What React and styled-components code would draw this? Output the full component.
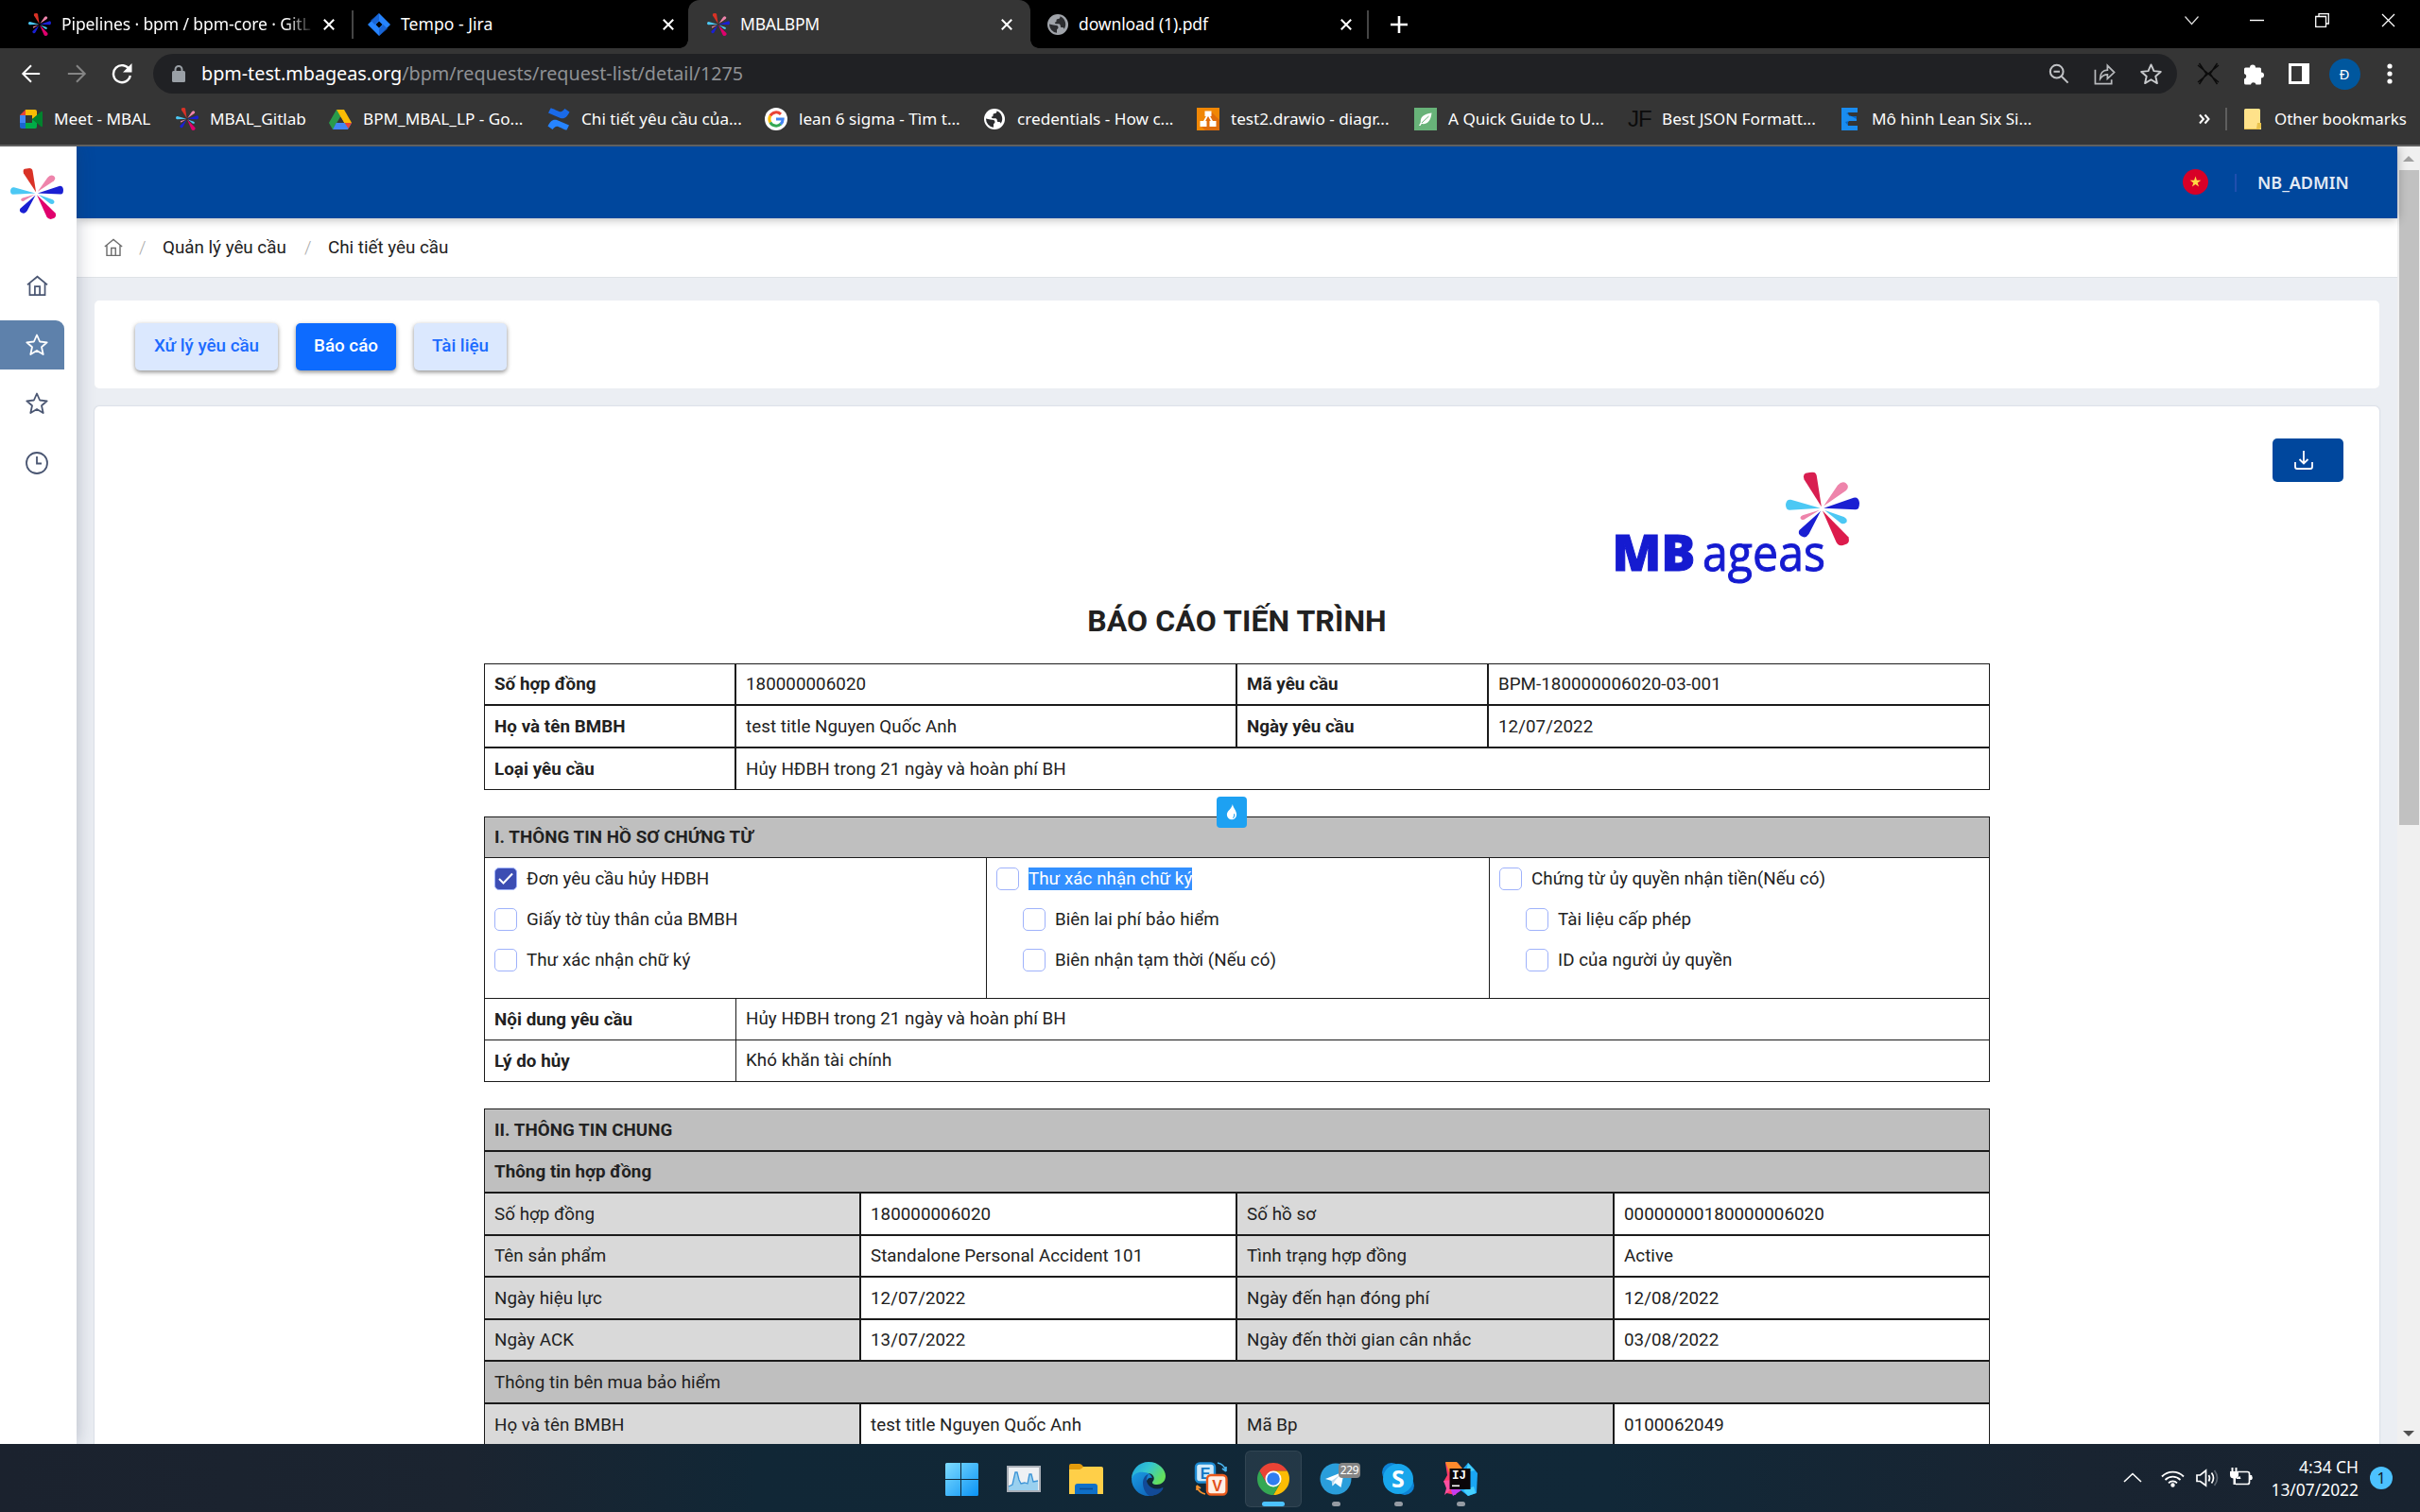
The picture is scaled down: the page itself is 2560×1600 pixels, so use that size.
import React from "react";
import styled, { createGlobalStyle, css } from "styled-components";

const UI = `"Noto Sans", "Open Sans", sans-serif`;
const INK = "#212121";

const Global = createGlobalStyle`
  * { box-sizing: border-box; }
  html, body { margin: 0; padding: 0; }
  body { width: 2560px; height: 1600px; overflow: hidden; background: #000; font-family: Roboto, sans-serif; }
  svg { display: block; flex: none; }
`;

const Screen = styled.div`
  width: 2560px;
  height: 1600px;
  display: flex;
  flex-direction: column;
  overflow: hidden;
`;

/* ---------- browser chrome ---------- */
const TabStrip = styled.div`
  height: 51px;
  flex: none;
  background: #000;
  display: flex;
  font: 18px/51px ${UI};
  color: #fff;
`;
const Tab = styled.div`
  position: relative;
  width: ${(p) => p.$w}px;
  padding-left: ${(p) => p.$pad}px;
  height: 51px;
  display: flex;
  align-items: center;
  background: ${(p) => (p.$active ? "#353535" : "transparent")};
  border-radius: ${(p) => (p.$active ? "12px 12px 0 0" : "0")};
  ${(p) =>
    p.$active &&
    css`
      &::before, &::after {
        content: "";
        position: absolute;
        bottom: 0;
        width: 9px;
        height: 9px;
      }
      &::before { left: -9px; background: radial-gradient(circle at 0 0, transparent 8.5px, #353535 9px); }
      &::after { right: -9px; background: radial-gradient(circle at 100% 0, transparent 8.5px, #353535 9px); }
    `}
`;
const TabTitle = styled.div`
  flex: none;
  width: ${(p) => p.$w}px;
  margin-left: 11px;
  white-space: pre;
  letter-spacing: ${(p) => p.$ls || 0}px;
  font-size: 17.5px;
  ${(p) => p.$fade && css`mask-image: linear-gradient(90deg, #000 90%, rgba(0, 0, 0, 0.1));`}
`;
const TabDivider = styled.div`
  width: 2px;
  height: 30px;
  margin-top: 11px;
  background: #454545;
`;
const Spacer = styled.div`
  flex: ${(p) => (p.$w ? "none" : 1)};
  width: ${(p) => (p.$w ? p.$w + "px" : "auto")};
`;
const IconSlot = styled.div`
  flex: none;
  width: ${(p) => p.$w}px;
  height: ${(p) => p.$h || 51}px;
  display: flex;
  align-items: center;
  justify-content: center;
`;
const WindowButtons = styled.div`
  display: flex;
  height: 42px;
  margin-right: -1px;
`;

const Toolbar = styled.div`
  height: 54px;
  flex: none;
  background: #353535;
  display: flex;
  align-items: center;
  padding-left: 9px;
`;
const Omnibox = styled.div`
  width: 2141px;
  height: 42px;
  margin-left: 9px;
  margin-right: 9px;
  border-radius: 21px;
  background: #202124;
  display: flex;
  align-items: center;
  padding-left: 15px;
  padding-right: 3px;
`;
const Url = styled.div`
  font: 19.75px/42px ${UI};
  color: #8f9195;
  white-space: nowrap;
  margin-left: 12px;
  b { font-weight: 400; color: #fff; }
`;
const Avatar = styled.div`
  width: 33px;
  height: 33px;
  border-radius: 50%;
  background: #00579e;
  color: #fff;
  font: 15px/33px ${UI};
  text-align: center;
`;

const Bookmarks = styled.div`
  height: 50px;
  flex: none;
  background: #353535;
  border-bottom: 2px solid #606060;
  display: flex;
  align-items: center;
  padding-left: 21px;
  padding-bottom: 6px;
  font: 17.15px/40px ${UI};
  color: #fff;
`;
const Bookmark = styled.div`
  width: ${(p) => p.$w}px;
  display: flex;
  align-items: center;
  gap: 12px;
  white-space: nowrap;
`;
const OtherBookmarks = styled.div`
  width: 154px;
  white-space: nowrap;
  font-size: 16.9px;
`;
const FavJF = styled.div`
  width: 24px;
  color: #0c0c0c;
  font: 24px/24px "Liberation Sans", Arial, sans-serif;
  letter-spacing: -1px;
`;

/* ---------- application ---------- */
const Page = styled.div`
  height: 1373px;
  flex: none;
  display: flex;
  background: #ebeef3;
  overflow: hidden;
`;
const Sidebar = styled.div`
  width: 81px;
  flex: none;
  background: #fff;
  box-shadow: 0 0 18px rgba(40, 50, 80, 0.28);
  z-index: 2;
  clip-path: inset(0 -24px 0 0);
`;
const SideLogo = styled.div`
  padding: 23px 0 0 11px;
  height: 121px;
`;
const SideItem = styled.div`
  height: 52px;
  margin-bottom: 10.6px;
  width: 68px;
  padding-left: 10px;
  display: flex;
  align-items: center;
  justify-content: center;
  color: ${(p) => (p.$active ? "#fff" : "#4a5672")};
  background: ${(p) => (p.$active ? "#5e81ab" : "transparent")};
  border-top-right-radius: 9px;
`;
const Main = styled.div`
  width: 2455px;
  display: flex;
  flex-direction: column;
`;
const Header = styled.div`
  height: 76px;
  flex: none;
  background: #00479d;
  display: flex;
  align-items: center;
  justify-content: flex-end;
  padding-right: 50px;
  padding-bottom: 1px;
  box-shadow: 0 1px 10px rgba(0, 0, 0, 0.3);
  z-index: 1;
`;
const HeaderRule = styled.div`
  width: 2px;
  height: 19px;
  margin: 2px 22px 0 28px;
  background: #1f4fae;
`;
const UserName = styled.div`
  font: 600 18px/30px ${UI};
  color: #e3eaf4;
  width: 98px;
  white-space: nowrap;
`;
const Crumbs = styled.div`
  height: 63px;
  flex: none;
  background: #fff;
  border-bottom: 1px solid #dfe2e6;
  display: flex;
  align-items: center;
  padding-left: 29px;
  font-size: 18.8px;
  color: ${INK};
  white-space: nowrap;
`;
const CrumbHome = styled.span`
  color: #6d6d6d;
`;
const Crumb = styled.span`
  width: ${(p) => p.$w}px;
`;
const Slash = styled.span`
  width: 8px;
  margin: 0 17px;
  color: #a8a8a8;
  font-weight: 300;
`;
const TabsCard = styled.div`
  margin: 24px 19px 0 19px;
  height: 93px;
  flex: none;
  background: #fff;
  border-radius: 5px;
  padding: 24px 0 0 43px;
  display: flex;
  gap: 19px;
`;
const Pill = styled.button`
  width: ${(p) => p.$w}px;
  height: 50px;
  padding: 0 0 2px;
  border: 0;
  border-radius: 5px;
  font: 500 18.8px Roboto, sans-serif;
  color: ${(p) => (p.$active ? "#fff" : "#1d6bff")};
  background: ${(p) => (p.$active ? "#0d6bff" : "#dbe8fe")};
  box-shadow: 0 2px 4px rgba(0, 0, 0, 0.36), 0 1px 6px rgba(0, 0, 0, 0.1);
  white-space: nowrap;
`;
const ReportCard = styled.div`
  margin: 19px 19px 0 19px;
  height: 1200px;
  flex: none;
  background: #fff;
  border-radius: 5px;
  box-shadow: 0 0 2px rgba(90, 105, 140, 0.35);
  display: grid;
  grid-template-columns: 412px 1593px 1fr;
`;
const Report = styled.div`
  grid-column: 2;
  padding-top: 65px;
  font-size: 18.75px;
  letter-spacing: 0.05px;
  color: ${INK};
`;
const LogoRow = styled.div`
  height: 125px;
  padding-left: 1188px;
`;
const Title = styled.h1`
  margin: 17px 0 25px;
  height: 40px;
  font: 700 32px/40px Roboto, sans-serif;
  letter-spacing: 0.1px;
  text-align: center;
`;
const Download = styled.button`
  margin: 34px 38px 0 0;
  width: 75px;
  height: 46px;
  padding: 0 9px 0 0;
  border: 0;
  border-radius: 5px;
  background: #00479d;
  justify-self: end;
  display: flex;
  align-items: center;
  justify-content: center;
`;
const Grid = styled.div`
  display: grid;
  width: 1593px;
  margin-bottom: 28px;
  grid-template-columns: ${(p) => p.$cols};
  grid-template-rows: ${(p) => p.$rows};
  line-height: 24px;
`;
const Cell = styled.div`
  border: 1px solid #1b1b1b;
  padding: 0 10px;
  display: flex;
  align-items: center;
  white-space: nowrap;
  grid-column: span ${(p) => p.$span || 1};
  font-weight: ${(p) => (p.$bold ? 700 : 400)};
  background: ${(p) => ({ head: "#bfbfbf", label: "#d9d9d9" }[p.$tone] || "#fff")};
`;
const DocTable = styled.div`
  position: relative;
  width: 1593px;
  margin-bottom: 28px;
  border: 1px solid #1b1b1b;
  line-height: 24px;
`;
const DocHead = styled.div`
  height: 42px;
  background: #bfbfbf;
  padding: 0 10px;
  font-weight: 700;
  line-height: 43px;
`;
const DocColumns = styled.div`
  height: 149px;
  border-top: 1px solid #1b1b1b;
  display: grid;
  grid-template-columns: 530px 532px 1fr;
`;
const DocColumn = styled.div`
  padding: 10px 0 0 10px;
  display: flex;
  flex-direction: column;
  gap: 19px;
  & + & { border-left: 1px solid #1b1b1b; }
`;
const Check = styled.div`
  height: 24px;
  display: flex;
  align-items: center;
  gap: 10px;
  padding-left: ${(p) => (p.$sub ? 28 : 0)}px;
  white-space: nowrap;
`;
const Box = styled.span`
  width: 24px;
  height: 24px;
  border-radius: 5px;
  border: 1px solid #9fb2fb;
  background: ${(p) => (p.$on ? "#3c4db3" : "#fff")};
  display: flex;
  align-items: center;
  justify-content: center;
`;
const Label = styled.span`
  line-height: 24px;
  background: ${(p) => (p.$sel ? "#3390ff" : "transparent")};
  color: ${(p) => (p.$sel ? "#fff" : "inherit")};
`;
const DocRow = styled.div`
  height: 44px;
  border-top: 1px solid #1b1b1b;
  display: grid;
  grid-template-columns: 265px 1fr;
  align-items: center;
  b { font-weight: 700; padding-left: 10px; }
  span { border-left: 1px solid #1b1b1b; padding-left: 10px; line-height: 43px; }
`;
const DropBadge = styled.div`
  position: absolute;
  left: 774px;
  top: -22px;
  width: 32px;
  height: 33px;
  border-radius: 4px;
  background: #1da1f2;
  display: flex;
  align-items: center;
  justify-content: center;
`;

const Scrollbar = styled.div`
  width: 24px;
  background: #f0f0f0;
  display: flex;
  flex-direction: column;
  align-items: center;
`;
const Arrow = styled.div`
  width: 0;
  height: 0;
  flex: none;
  border: 6px solid transparent;
  ${(p) =>
    p.$up
      ? css`border-bottom-color: #a0a0a0; border-top: 0; margin: 10px 0 9px;`
      : css`border-top-color: #505050; border-bottom: 0; margin: auto 0 8px;`}
`;
const Thumb = styled.div`
  width: 21px;
  height: 693px;
  background: #c1c1c1;
`;

/* ---------- taskbar ---------- */
const Taskbar = styled.div`
  height: 72px;
  flex: none;
  display: flex;
  background: linear-gradient(90deg, #1b222e 0, #1b2430 490px, #112736 800px, #112838 1700px, #192431 2200px, #182330 100%);
  color: #fff;
`;
const TaskItem = styled.div`
  position: relative;
  width: 60px;
  height: 60px;
  margin: 7px 3px 0;
  border-radius: 6px;
  display: flex;
  flex-direction: column;
  align-items: center;
  padding-top: 12px;
  background: ${(p) => (p.$active ? "rgba(255,255,255,.08)" : "transparent")};
  box-shadow: ${(p) => (p.$active ? "inset 0 0 0 1px rgba(255,255,255,.07)" : "none")};
  svg { width: 36px; height: 36px; }
`;
const Indicator = styled.div`
  width: ${(p) => (p.$active ? 24 : 9)}px;
  height: 5px;
  border-radius: 3px;
  margin-top: 6px;
  background: ${(p) => (p.$active ? "#4cc2ff" : "#959ba3")};
`;
const CountBadge = styled.div`
  position: absolute;
  left: 33px;
  top: 13px;
  width: 23px;
  height: 16px;
  border-radius: 4px;
  background: #858585;
  font: 12px/16px ${UI};
  text-align: center;
  letter-spacing: -0.3px;
`;
const Clock = styled.div`
  width: 100px;
  margin-left: 6px;
  padding-top: 12px;
  text-align: right;
  font: 17.4px/24px ${UI};
  div { white-space: nowrap; }
`;
const Notice = styled.div`
  width: 24px;
  height: 24px;
  margin: 24px 29px 0 12px;
  border-radius: 50%;
  background: #4cc2ff;
  color: #10202c;
  font: 16px/24px ${UI};
  text-align: center;
`;

/* ---------- drawings ---------- */
const Burst = ({ w = 24, h = w, red = "#d93226", magenta = "#e0006d" }) => (
  <svg width={w} height={h} viewBox="0 0 100 100" preserveAspectRatio="none">
    <path fill={red} d="M48.5 47 25 10Q23 3 27 1.5L36 0Q41 0 42 5Z" />
    <path fill="#ee84ab" d="M51.5 46 70.5 18Q77 11 82 15.500 87 20 82 25Z" />
    <path fill="#1a1fd2" d="M51.500 49 92 35Q99 33.500 100 42 100 51 95 51Z" />
    <path fill="#4cc8f4" d="M47 49 7 37.500Q1 36.500 0 44 0 51.500 5 51.500Z" />
    <path fill="#ee84ab" d="M46 51.500 23 58.500Q18 61 21 64 24 66 27 63Z" />
    <path fill="#1a1fd2" d="M47.500 53 31.500 84Q27 91 21 87 16 84 18.500 79Z" />
    <path fill={magenta} d="M50 52.500 85 88Q87.500 94 83 97.500L76 100Q71 100 68.500 95Z" />
    <path fill="#4cc8f4" d="M53 52 79 61Q84.500 64 82.500 68 80 71.500 75 69.500Z" />
  </svg>
);
const Stroke = ({ s = 24, w = 2, c = "currentColor", children, box = 24 }) => (
  <svg width={s} height={s} viewBox={`0 0 ${box} ${box}`} fill="none" stroke={c} strokeWidth={w}>
    {children}
  </svg>
);
const Cross = ({ s = 12, w = 2 }) => (
  <Stroke s={s} w={w} box={12} c="#fff"><path d="M.8.8l10.400 10.400M11.200.8.8 11.200" /></Stroke>
);
const Globe = ({ c }) => (
  <svg width="22" height="22" viewBox="0 0 22 22">
    <circle cx="11" cy="11" r="11" fill={c} />
    <path fill="#2b2c2f" d="M2 10.500 6.500 11.500c3 .3 5 .5 5 2.500 0 1-.8 1.500-1.500 2.200v3.600A9.200 9.200 0 0 1 2 10.500ZM13.500 2.300c0 2-.6 2.700-2 2.700-1.800 0-2 .8-2 2.200 0 1-.7 1.300-1.700 1.300 0 1.500 1 1.800 3 1.800 2.200 0 3 .6 3 2.200 0 1.300.6 1.500 1.600 1.500 1.400 0 2.100.6 2.400 1.700a9.200 9.200 0 0 0-4.300-13.400Z" />
  </svg>
);
const JiraMark = () => (
  <svg width="24" height="24" viewBox="0 0 24 24">
    <path fill="#2684ff" d="M12 0 24 12 12 24 0 12Z" />
    <path fill="#1259c4" d="M12 0v7.500L7.500 12 3 7.500ZM12 24v-7.500L16.500 12l4.500 4.500Z" opacity=".7" />
    <path fill="#000" d="m12 8.500 3.500 3.500-3.500 3.500L8.500 12Z" />
  </svg>
);
const HomeIcon = ({ s = 24, w = 1.8 }) => (
  <Stroke s={s} w={w}>
    <path d="M1 10.800 12 1.800l11 9M3.600 9v13h16.800V9M9.300 22v-9.300h5.400V22" />
  </Stroke>
);
const StarIcon = ({ s = 24, w = 1.8, c }) => (
  <Stroke s={s} w={w} c={c}>
    <path strokeLinejoin="round" d="m12 1.500 3.100 7 7.600.8-5.700 5 1.700 7.700L12 18l-6.700 4 1.700-7.700-5.700-5 7.600-.8Z" />
  </Stroke>
);
const MeetMark = () => (
  <svg width="24" height="20" viewBox="0 0 24 20">
    <path fill="#ea4335" d="M6 0v6H0Z" /><path fill="#4285f4" d="M0 6h6v8H0Z" /><path fill="#1a66d0" d="M0 14h6v6H2q-2 0-2-2Z" />
    <path fill="#fbbc04" d="M6 0h10q2 0 2 2v5l-5 3V6H6Z" /><path fill="#00ac47" d="M6 20v-6h7v-4l5 4v4q0 2-2 2Z" />
    <path fill="#00832d" d="m13 10 9.500-8q1.500-.7 1.500.8v14.400q0 1.500-1.500.8Z" />
  </svg>
);
const DriveMark = () => (
  <svg width="24" height="21" viewBox="0 0 24 21">
    <path fill="#34a853" d="M8 0h4l2 6-7 12-3 3-4-7Z" /><path fill="#fbbc04" d="M8 0h8l8 14h-8Z" />
    <path fill="#4285f4" d="M7.500 14H24l-4 7H4Z" /><path fill="#188038" d="M8 0l4 7-8 14-4-7Z" opacity=".35" /><path fill="#ea4335" d="M16.500 14H24l-3.500 6Z" /><path fill="#353535" d="m12 7.500 3.800 6.500H8.200Z" />
  </svg>
);
const ConfluenceMark = () => (
  <svg width="24" height="24" viewBox="0 0 24 24">
    <path fill="#2684ff" d="M.5 19.500c3-6 6-8.500 12-5.500l10.500 4.500-2.500 5c-1 .5-6-2.300-9-3.500-2.500-1-4 .8-6 3Z" />
    <path fill="#1a6ae8" d="M23.500 4.500c-3 6-6 8.500-12 5.500L1 5.500 3.500.5c1-.5 6 2.300 9 3.500 2.500 1 4-.8 6-3Z" />
  </svg>
);
const GoogleMark = () => (
  <svg width="24" height="24" viewBox="0 0 24 24">
    <circle cx="12" cy="12" r="12" fill="#fff" />
    <g fill="none" strokeWidth="3">
      <path stroke="#ea4335" d="M5.800 8.500A7.200 7.200 0 0 1 17 6.800" /><path stroke="#fbbc04" d="M5.800 15.500a7.200 7.200 0 0 1 0-7" />
      <path stroke="#34a853" d="M17 17.200A7.200 7.200 0 0 1 5.800 15.500" /><path stroke="#4285f4" d="M12 12h7.200a7.200 7.200 0 0 1-2.400 5.300" />
    </g>
  </svg>
);
const DrawioMark = () => (
  <svg width="24" height="24" viewBox="0 0 24 24">
    <path fill="#f08705" d="M0 0h24v24H0Z" /><path fill="#df6c0c" d="m15 4 9 9v11H9l-5-5Z" />
    <path stroke="#fff" strokeWidth="1.800" d="M12 7 7 16M12 7l5 9" /><path fill="#fff" d="M8.500 3.500h7V9h-7ZM3.500 14h7v6h-7ZM13.500 14h7v6h-7Z" />
  </svg>
);
const LeafMark = () => (
  <svg width="24" height="24" viewBox="0 0 24 24">
    <path fill="#68b379" d="M0 0h24v24H0Z" />
    <path fill="#fff" d="M18.500 5.500C10 7 6.500 9.500 6.800 15.500L5 19h1.500l1.300-2c5.500.8 9.500-2 10.700-11.500Z" />
    <path stroke="#68b379" fill="none" d="M8 16 15.500 9" />
  </svg>
);
const EMark = () => (
  <svg width="17" height="24" viewBox="0 0 17 24">
    <path fill="#1a8cf0" d="M0 0h17v5H7q0 4 3 4h6v5H8q-2 1-1 5h10v5H0Z" /><path fill="#0566c8" d="M7 5q0 4 3 4h6v3L5 6ZM8 14q-2 1-1 5l-3-4Z" />
  </svg>
);

const BrandLogo = () => (
  <svg width="275" height="125" viewBox="0 0 275 125">
    <g transform="translate(189 4.500)"><Burst w={78} h={78} red="#d81e50" magenta="#dc1c4c" /></g>
    <text x="5.500" y="109" fontFamily="Open Sans, Noto Sans, sans-serif" fontWeight="800" fontSize="53" fill="#151bd0" stroke="#151bd0" strokeWidth="1" textLength="88" lengthAdjust="spacingAndGlyphs">MB</text>
    <text x="101" y="109" fontFamily="Open Sans, Noto Sans, sans-serif" fontWeight="500" fontSize="53" fill="#151bd0" stroke="#151bd0" strokeWidth="1" textLength="130" lengthAdjust="spacingAndGlyphs">ageas</text>
  </svg>
);

const WindowsIcon = () => (
  <svg viewBox="0 0 36 36">
    <defs><linearGradient id="wg" x1="0" y1="0" x2="1" y2="1"><stop offset="0" stopColor="#7fdcff" /><stop offset="1" stopColor="#0a93f5" /></linearGradient></defs>
    <path fill="url(#wg)" d="M2.500 1H17v17H1V2.500Q1 1 2.500 1ZM18 1h16.500Q36 1 36 2.500V18H18ZM1 19h16v17H2.500Q1 36 1 34.500ZM18 19h18v15.500q0 1.500-1.500 1.500H18Z" />
  </svg>
);
const PerfIcon = () => (
  <svg viewBox="0 0 36 36">
    <path fill="#aab0b8" d="M0 4h36v28H0Z" /><path fill="#eef1f4" d="M2 6h32v24H2Z" />
    <path fill="#7cc4ee" d="M2 26l4-2 3-13h2l2 8 2 4 4-1 3 1 2-10h2l2 8 5-1v10H2Z" opacity=".75" />
    <path fill="none" stroke="#3c94d6" strokeWidth="1.300" d="M2 26l4-2 3-13h2l2 8 2 4 4-1 3 1 2-10h2l2 8 5-1" />
  </svg>
);
const FolderIcon = () => (
  <svg viewBox="0 0 36 36">
    <path fill="#e39b0c" d="M0 4q0-2 2-2h9q2 0 4 3h4v8H0Z" /><path fill="#ffcf48" d="M0 8h11q2 0 4-3h19q2 0 2 2v27H0Z" />
    <path fill="#0f70c9" d="M6 34v-8q0-3 3-3h18q3 0 3 3v8Z" /><path stroke="#0a4d93" strokeWidth="1.600" d="M11 28.500h14" />
  </svg>
);
const EdgeIcon = () => (
  <svg viewBox="0 0 36 36">
    <defs>
      <linearGradient id="eg" x1="0" y1="0" x2="1" y2=".5"><stop offset="0" stopColor="#1aa0e0" /><stop offset=".5" stopColor="#35c6d0" /><stop offset="1" stopColor="#64e05c" /></linearGradient>
      <linearGradient id="eb" x1="0" y1="0" x2="1" y2="1"><stop offset="0" stopColor="#1b9de2" /><stop offset="1" stopColor="#0b56b0" /></linearGradient>
    </defs>
    <path fill="url(#eg)" d="M0 18C0 8 8 0 18 0c11 0 18 8 18 15 0 6-5 9-9 9-5 0-6-2-4-4 2-3 0-8-6-8C9 12 4 14 0 18Z" />
    <path fill="url(#eb)" d="M0 18c2-6 8-8 13-7 5 0 8 3 9 6-2-1-5 0-6 3-1 4 1 9 7 10 4 1 7 0 10-2-3 5-9 8-15 8C8 36 0 28 0 18Z" />
    <path fill="#124a97" d="M12 22c0-4 2-8 6-9-4 5-2 11 3 14 4 2 8 2 12 0q1 0 0 2c-3 5-9 7-14 7-4-2-7-8-7-14Z" />
  </svg>
);
const EVIcon = () => (
  <svg viewBox="0 0 36 36">
    <rect x="2" y="1.500" width="20" height="20" rx="4" fill="#cfeafa" stroke="#1c8ad2" strokeWidth="2.400" />
    <text x="12" y="17.500" textAnchor="middle" fontFamily="Liberation Sans, sans-serif" fontWeight="700" fontSize="16" fill="#0f78c4">E</text>
    <rect x="14" y="14" width="20.500" height="20.500" rx="4" fill="#fff0e6" stroke="#ea5a1c" strokeWidth="2.400" />
    <text x="24.500" y="30.500" textAnchor="middle" fontFamily="Liberation Sans, sans-serif" fontWeight="700" fontSize="16" fill="#e2501a">V</text>
    <path fill="none" stroke="#49b4ee" strokeWidth="1.600" d="M25 1c5 1 8 4 9 9m0 0-4-3m4 3V5" /><path fill="none" stroke="#f5922e" strokeWidth="1.600" d="M12 34c-5-1-8-4-9-9m0 0 4 3m-4-3v5" />
  </svg>
);
const ChromeIcon = () => (
  <svg viewBox="0 0 36 36">
    <path fill="#ea4335" d="M3.300 9.500a17 17 0 0 1 29.400 0H18l-7.500 12.800Z" /><path fill="#fbbc04" d="M32.700 9.500A17 17 0 0 1 18 35l7.400-12.800L18 9.500Z" />
    <path fill="#34a853" d="M3.300 9.500A17 17 0 0 0 18 35l7.400-12.800H10.600Z" /><circle cx="18" cy="18" r="8.500" fill="#fff" /><circle cx="18" cy="18" r="6.800" fill="#2f7df0" />
  </svg>
);
const TelegramIcon = () => (
  <svg viewBox="0 0 36 36">
    <circle cx="18" cy="18" r="16.500" fill="#2a9edb" /><path fill="#fff" d="M7 18 27 10l-3.500 17-6-4.500-3 3-.8-5.500Z" /><path fill="#b9d9ee" d="m13.700 20 9-6.500-6 7-2.200 5Z" />
  </svg>
);
const SkypeIcon = () => (
  <svg viewBox="0 0 36 36">
    <circle cx="11" cy="11" r="10" fill="#0d83d6" /><circle cx="25" cy="25" r="10" fill="#0d83d6" /><circle cx="18" cy="18" r="16" fill="#18a6ec" />
    <text x="18" y="27" textAnchor="middle" fontFamily="Open Sans, sans-serif" fontWeight="700" fontSize="25" fill="#fff">S</text>
  </svg>
);
const IJIcon = () => (
  <svg viewBox="0 0 36 36">
    <path fill="#ff3c6a" d="m2 1 13 0 6 8-8 26-10-2 3-7-6-5 4-7Z" /><path fill="#ff8a2c" d="m2 0 12 0 6 7-14 4Z" /><path fill="#fc4fa0" d="M0 20l9-1v9l-8 7 2-7Z" /><path fill="#c63cf0" d="M6 24l8-2 5 8-9 6Z" />
    <path fill="#1aa6f5" d="m20 8 6-7 6 6 4 5-1 21-9 3-9-7Z" /><path fill="#46d0ff" d="m26 1 7 8-9 2ZM21 30l11-4 2 7-8 3Z" />
    <path fill="#0b0508" d="M6.500 7h22v22h-22Z" />
    <text x="9" y="17.500" fontFamily="Liberation Mono, monospace" fontWeight="700" fontSize="12.500" fill="#fff">IJ</text>
    <path fill="#fff" d="M9 24.500h8v1.600H9Z" />
  </svg>
);

const BOOKMARKS = [
  [165, "Meet - MBAL", <MeetMark />],
  [162, "MBAL_Gitlab", <Burst />],
  [231, "BPM_MBAL_LP - Go...", <DriveMark />],
  [230, "Chi tiết yêu cầu của...", <ConfluenceMark />],
  [231, "lean 6 sigma - Tìm t...", <GoogleMark />],
  [226, "credentials - How c...", <IconSlot $w={24} $h={24}><Globe c="#fff" /></IconSlot>],
  [230, "test2.drawio - diagr...", <DrawioMark />],
  [226, "A Quick Guide to U...", <LeafMark />],
  [222, "Best JSON Formatt...", <FavJF>JF</FavJF>],
  [230, "Mô hình Lean Six Si...", <IconSlot $w={24} $h={24}><EMark /></IconSlot>],
];

const ContractRows = [
  ["Số hợp đồng", "180000006020", "Số hồ sơ", "00000000180000006020"],
  ["Tên sản phẩm", "Standalone Personal Accident 101", "Tình trạng hợp đồng", "Active"],
  ["Ngày hiệu lực", "12/07/2022", "Ngày đến hạn đóng phí", "12/08/2022"],
  ["Ngày ACK", "13/07/2022", "Ngày đến thời gian cân nhắc", "03/08/2022"],
];
const DataRow = ({ r }) => (
  <>
    <Cell $tone="label">{r[0]}</Cell><Cell>{r[1]}</Cell>
    <Cell $tone="label">{r[2]}</Cell><Cell>{r[3]}</Cell>
  </>
);
const Item = ({ sub, on, sel, children }) => (
  <Check $sub={sub}>
    <Box $on={on}>{on && <Stroke s={18} w={2} c="#fff" box={18}><path d="m2 9 4.500 4.500L16 3.500" /></Stroke>}</Box>
    <Label $sel={sel}>{children}</Label>
  </Check>
);

export default function App() {
  return (
    <Screen>
      <Global />
      <TabStrip>
        <Tab $w={372} $pad={30}>
          <Burst w={24} /><TabTitle $w={264} $fade $ls={-0.1}>Pipelines · bpm / bpm-core · GitL</TabTitle>
          <IconSlot $w={38}><Cross /></IconSlot>
        </Tab>
        <TabDivider />
        <Tab $w={354} $pad={15}>
          <JiraMark /><TabTitle $w={264} $ls={0.05}>Tempo - Jira</TabTitle><IconSlot $w={38}><Cross /></IconSlot>
        </Tab>
        <Tab $w={362} $pad={20} $active>
          <Burst w={24} /><TabTitle $w={263} $ls={-0.2}>MBALBPM</TabTitle><IconSlot $w={38}><Cross /></IconSlot>
        </Tab>
        <Tab $w={356} $pad={17}>
          <IconSlot $w={23}><Globe c="#a0a4aa" /></IconSlot><TabTitle $w={264} $ls={-0.1}>download (1).pdf</TabTitle><IconSlot $w={38}><Cross /></IconSlot>
        </Tab>
        <TabDivider />
        <IconSlot $w={64}><Stroke s={18} w={2.6} c="#fff" box={18}><path d="M9 0v18M0 9h18" /></Stroke></IconSlot>
        <Spacer />
        <WindowButtons>
          <IconSlot $w={70} $h={43}><Stroke s={15} w={1.2} c="#ddd" box={15}><path d="m.5 3.500 7 8 7-8" /></Stroke></IconSlot>
          <IconSlot $w={69} $h={43}><Stroke s={15} w={1.4} c="#fff" box={15}><path d="M0 7.500h15" /></Stroke></IconSlot>
          <IconSlot $w={69} $h={43}><Stroke s={15} w={1.3} c="#fff" box={15}><path d="M.7 3.500h10.800v10.800H.7ZM4 3.500V.7h10.300V11h-2.800" /></Stroke></IconSlot>
          <IconSlot $w={70} $h={43}><Cross s={15} w={1} /></IconSlot>
        </WindowButtons>
      </TabStrip>

      <Toolbar>
        <IconSlot $w={48}><Stroke s={22} w={2.2} c="#fff"><path d="M22 12H3M12 2.500 2.500 12l9.500 9.500" /></Stroke></IconSlot>
        <IconSlot $w={48}><Stroke s={22} w={2.2} c="#858585"><path d="M2 12h19M12 2.500l9.500 9.500-9.500 9.500" /></Stroke></IconSlot>
        <IconSlot $w={48}>
          <svg width="22" height="22" viewBox="0 0 22 22"><path fill="none" stroke="#fff" strokeWidth="2.400" d="M19 7a9 9 0 1 0 .8 6" /><path fill="#fff" d="M21.500 0v9.500H12Z" /></svg>
        </IconSlot>
        <Omnibox>
          <IconSlot $w={24}>
            <svg width="14" height="18" viewBox="0 0 14 18"><path fill="#9aa0a6" d="M1.500 6h11q1.500 0 1.500 1.500v9q0 1.500-1.500 1.500h-11Q0 18 0 16.500v-9Q0 6 1.500 6Z" /><path fill="none" stroke="#9aa0a6" strokeWidth="2" d="M3.500 7V4.500a3.500 3.500 0 0 1 7 0V7" /></svg>
          </IconSlot>
          <Url><b>bpm-test.mbageas.org</b>/bpm/requests/request-list/detail/1275</Url>
          <Spacer />
          <IconSlot $w={49}><Stroke s={22} w={2.2} c="#c0c2c5"><circle cx="9.500" cy="9.500" r="7.500" /><path d="m15 15 7.500 7.500M6 9.500h7" /></Stroke></IconSlot>
          <IconSlot $w={49}><Stroke s={23} w={1.8} c="#b8babd"><path d="M1.500 7v15.500h18V18M7 17c0-6 3-9.500 8-9.500V2.500L22.500 10 15 17v-4.500c-4 0-6 1.500-8 4.500Z" /></Stroke></IconSlot>
          <IconSlot $w={49}><StarIcon s={23} w={2} c="#c8cacd" /></IconSlot>
        </Omnibox>
        <IconSlot $w={48}><Stroke s={24} w={1.500} c="#0b0b0b"><path d="M2.500 1 10 12 2.500 23M21.500 1 14 12l7.500 11M1 3l22 18M23 3 1 21" /></Stroke></IconSlot>
        <IconSlot $w={48}>
          <svg width="23" height="23" viewBox="0 0 23 23"><path fill="#fff" d="M7 4.500a3 3 0 0 1 6 0h4.500Q19 4.500 19 6v3.500a3 3 0 0 1 0 6V21q0 1.500-1.500 1.500h-4a2.800 2.800 0 0 0-5.500 0H3Q1 22.500 1 21v-4.500a2.800 2.800 0 0 0 0-5.500V6Q1 4.500 2.500 4.500Z" /></svg>
        </IconSlot>
        <IconSlot $w={48}><svg width="22" height="22" viewBox="0 0 22 22"><path fill="#fff" fillRule="evenodd" d="M0 0h22v22H0ZM3 3v16h11V3Z" /></svg></IconSlot>
        <IconSlot $w={48}><Avatar>Đ</Avatar></IconSlot>
        <IconSlot $w={48}><svg width="6" height="22" viewBox="0 0 6 22" fill="#fff"><circle cx="3" cy="3" r="2.600" /><circle cx="3" cy="11" r="2.600" /><circle cx="3" cy="19" r="2.600" /></svg></IconSlot>
      </Toolbar>

      <Bookmarks>
        {BOOKMARKS.map(([w, text, icon]) => (
          <Bookmark key={text} $w={w}>{icon}{text}</Bookmark>
        ))}
        <Spacer />
        <IconSlot $w={30} $h={24}><Stroke s={12} w={2} c="#fff" box={12}><path d="m1 1.500 4 4.500-4 4.500M6.500 1.500l4 4.500-4 4.500" /></Stroke></IconSlot>
        <Spacer $w={7} />
        <svg width="2" height="24"><path fill="#5e5e5e" d="M0 0h2v24H0Z" /></svg>
        <Spacer $w={17} />
        <svg width="20" height="22" viewBox="0 0 20 22"><path fill="#ffe28a" d="M1 1.500Q1 0 2.500 0h14Q18 0 18 1.500V15h1v7H1Z" /><path fill="#e9c24c" d="M15 15h4v5l-2 2H1v-1h13Z" /></svg>
        <Spacer $w={13} />
        <OtherBookmarks>Other bookmarks</OtherBookmarks>
      </Bookmarks>

      <Page>
        <Sidebar>
          <SideLogo><Burst w={56} h={54} /></SideLogo>
          <SideItem><HomeIcon s={23} /></SideItem>
          <SideItem $active><StarIcon s={24} /></SideItem>
          <SideItem><StarIcon s={24} /></SideItem>
          <SideItem><Stroke s={24} w={1.8}><circle cx="12" cy="12" r="11" /><path d="M12 5v7.500h5" /></Stroke></SideItem>
        </Sidebar>
        <Main>
          <Header>
            <svg width="27" height="27" viewBox="0 0 27 27"><circle cx="13.500" cy="13.500" r="13.500" fill="#d80027" /><path fill="#ffda44" d="m13.500 7.600 1.400 4.200h4.400l-3.600 2.600 1.400 4.200-3.600-2.600-3.600 2.600 1.400-4.200-3.600-2.600h4.400Z" /></svg>
            <HeaderRule />
            <UserName>NB_ADMIN</UserName>
          </Header>
          <Crumbs>
            <CrumbHome><HomeIcon s={20} w={1.7} /></CrumbHome>
            <Slash>/</Slash><Crumb $w={133}>Quản lý yêu cầu</Crumb>
            <Slash>/</Slash><Crumb $w={132}>Chi tiết yêu cầu</Crumb>
          </Crumbs>
          <TabsCard>
            <Pill $w={151}>Xử lý yêu cầu</Pill>
            <Pill $w={106} $active>Báo cáo</Pill>
            <Pill $w={98}>Tài liệu</Pill>
          </TabsCard>
          <ReportCard>
            <Report>
              <LogoRow><BrandLogo /></LogoRow>
              <Title>BÁO CÁO TIẾN TRÌNH</Title>

              <Grid $cols="266px 530px 266px 531px" $rows="44px 45px 45px">
                <Cell $bold>Số hợp đồng</Cell><Cell>180000006020</Cell><Cell $bold>Mã yêu cầu</Cell><Cell>BPM-180000006020-03-001</Cell>
                <Cell $bold>Họ và tên BMBH</Cell><Cell>test title Nguyen Quốc Anh</Cell><Cell $bold>Ngày yêu cầu</Cell><Cell>12/07/2022</Cell>
                <Cell $bold>Loại yêu cầu</Cell><Cell $span={3}>Hủy HĐBH trong 21 ngày và hoàn phí BH</Cell>
              </Grid>

              <DocTable>
                <DocHead>I. THÔNG TIN HỒ SƠ CHỨNG TỪ</DocHead>
                <DocColumns>
                  <DocColumn>
                    <Item on>Đơn yêu cầu hủy HĐBH</Item><Item>Giấy tờ tùy thân của BMBH</Item><Item>Thư xác nhận chữ ký</Item>
                  </DocColumn>
                  <DocColumn>
                    <Item sel>Thư xác nhận chữ ký</Item><Item sub>Biên lai phí bảo hiểm</Item><Item sub>Biên nhận tạm thời (Nếu có)</Item>
                  </DocColumn>
                  <DocColumn>
                    <Item>Chứng từ ủy quyền nhận tiền(Nếu có)</Item><Item sub>Tài liệu cấp phép</Item><Item sub>ID của người ủy quyền</Item>
                  </DocColumn>
                </DocColumns>
                <DocRow><b>Nội dung yêu cầu</b><span>Hủy HĐBH trong 21 ngày và hoàn phí BH</span></DocRow>
                <DocRow><b>Lý do hủy</b><span>Khó khăn tài chính</span></DocRow>
                <DropBadge>
                  <svg width="12" height="19" viewBox="0 0 14 20"><path fill="#fff" d="M8 0c1 5 5 8 5 13a6 6 0 0 1-12 0C1 8 7 6 8 0Z" /><path fill="none" stroke="#1da1f2" strokeWidth="1.200" d="M10 12q1 3-1.500 5" /></svg>
                </DropBadge>
              </DocTable>

              <Grid $cols="398px 398px 399px 398px" $rows="45px 44px 45px 44px 45px 44px 45px 45px">
                <Cell $span={4} $tone="head" $bold>II. THÔNG TIN CHUNG</Cell>
                <Cell $span={4} $tone="head" $bold>Thông tin hợp đồng</Cell>
                {ContractRows.map((r) => <DataRow key={r[0]} r={r} />)}
                <Cell $span={4} $tone="head">Thông tin bên mua bảo hiểm</Cell>
                <DataRow r={["Họ và tên BMBH", "test title Nguyen Quốc Anh", "Mã Bp", "0100062049"]} />
              </Grid>
            </Report>
            <Download>
              <Stroke s={22} w={1.8} c="#fff" box={22}><path d="M11 1v13M6.500 10 11 14.500l4.500-4.500M2 13v5q0 2 2 2h14q2 0 2-2v-5" /></Stroke>
            </Download>
          </ReportCard>
        </Main>
        <Scrollbar><Arrow $up /><Thumb /><Arrow /></Scrollbar>
      </Page>

      <Taskbar>
        <Spacer $w={984} />
        <TaskItem><WindowsIcon /></TaskItem>
        <TaskItem><PerfIcon /></TaskItem>
        <TaskItem><FolderIcon /></TaskItem>
        <TaskItem><EdgeIcon /></TaskItem>
        <TaskItem><EVIcon /></TaskItem>
        <TaskItem $active><ChromeIcon /><Indicator $active /></TaskItem>
        <TaskItem><TelegramIcon /><CountBadge>229</CountBadge><Indicator /></TaskItem>
        <TaskItem><SkypeIcon /><Indicator /></TaskItem>
        <TaskItem><IJIcon /><Indicator /></TaskItem>
        <Spacer />
        <IconSlot $w={46} $h={71}><Stroke s={20} w={1.6} c="#fff" box={20}><path d="m1 14 9-8.500 9 8.500" /></Stroke></IconSlot>
        <IconSlot $w={38} $h={73}>
          <svg width="25" height="19" viewBox="0 0 25 19" fill="none" stroke="#fff" strokeWidth="1.800"><path d="M1 7.500a16 16 0 0 1 23 0M4.500 11a11.300 11.300 0 0 1 16 0M8 14.300a6.400 6.400 0 0 1 9 0" /><circle cx="12.500" cy="16.500" r="1.300" fill="#fff" /></svg>
        </IconSlot>
        <IconSlot $w={36} $h={72}>
          <svg width="25" height="20" viewBox="0 0 25 20" fill="none" stroke="#fff" strokeWidth="1.700"><path d="M1 7v6.500h3.500L10.500 18V2L4.500 7ZM13.500 7q2 3 0 6.500M16.500 4.500q4 5.500 0 11" /><path stroke="#5c6570" d="M19.500 2q6 8 0 16" /></svg>
        </IconSlot>
        <IconSlot $w={36} $h={70}>
          <svg width="25" height="20" viewBox="0 0 25 20"><path fill="none" stroke="#fff" strokeWidth="1.700" d="M8 4.500h10.500q2 0 2 2v9q0 2-2 2H6" /><path fill="#fff" d="M21 8h2q1.500 2.500 0 5h-2ZM0 4h9v4q0 3-3 3.500V18H3.500v-6.500Q0 11 0 8ZM1.500 0h2v4h-2ZM5.500 0h2v4h-2ZM7 12h4.500l-1-3L7 11Z" /></svg>
        </IconSlot>
        <Clock><div>4:34 CH</div><div>13/07/2022</div></Clock>
        <Notice>1</Notice>
      </Taskbar>
    </Screen>
  );
}
